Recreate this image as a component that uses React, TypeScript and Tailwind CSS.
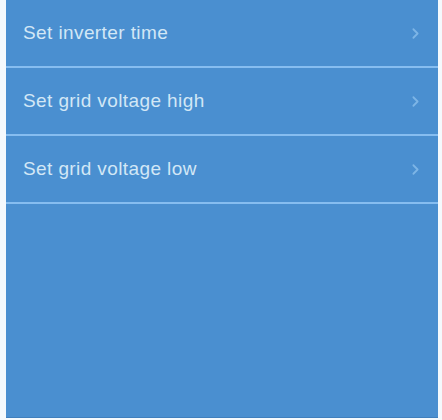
import { ChevronRight } from 'lucide-react';

const items = ['Set inverter time', 'Set grid voltage high', 'Set grid voltage low'];

export default function App() {
  return (
    <div className="w-[442px] h-[420px] bg-[#f4f9fd] pl-[6px] pr-[4px] pb-[2px]">
      <div
        className="h-full bg-[#4a8fd0] border-b border-[#3f7fbd]"
        style={{ fontFamily: '"Liberation Sans", Arial, sans-serif' }}
      >
        {items.map((label) => (
          <div
            key={label}
            className="h-[68px] flex items-center justify-between pl-[17px] pr-[14px] border-b-2 border-[#86bdf0]"
          >
            <span className="text-[19px] tracking-[0.4px] text-[#d2e7f6]">{label}</span>
            <ChevronRight size={17} strokeWidth={2.5} className="text-[#7db5e6]" />
          </div>
        ))}
      </div>
    </div>
  );
}
